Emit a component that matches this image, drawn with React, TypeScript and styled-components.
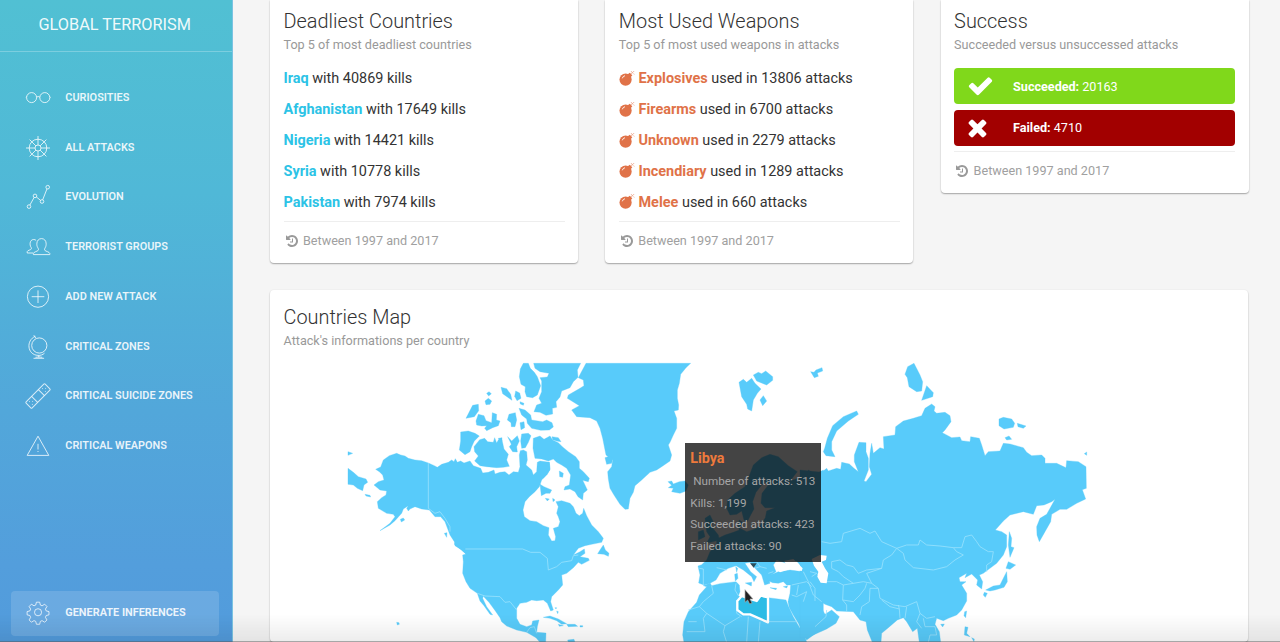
import React from "react";
import styled, { createGlobalStyle } from "styled-components";

const GlobalStyle = createGlobalStyle`
  * { box-sizing: border-box; }
  html, body { margin: 0; height: 100%; overflow: hidden; }
  body { font-family: Roboto, "Liberation Sans", sans-serif; background: #f5f5f5; color: #333; }
`;

const Page = styled.div`
  display: flex;
  width: 1280px;
  height: 642px;
  overflow: hidden;
  position: relative;
`;

const Sidebar = styled.aside`
  flex: 0 0 233px;
  height: 642px;
  display: flex;
  flex-direction: column;
  background: linear-gradient(to bottom, #51c0d3 0%, #50b8d7 30%, #52a7da 64%, #539edc 88%, #529bdc 100%);
  border-right: 1px solid #7ac3e2;
  color: #fff;
`;

const Brand = styled.div`
  height: 52px;
  padding: 15px 0 0 38.5px;
  border-bottom: 1px solid rgba(255, 255, 255, 0.25);
  font-size: 16.3px;
  line-height: 20px;
  white-space: nowrap;
  color: rgba(255, 255, 255, 0.93);
`;

const Nav = styled.nav`
  flex: 1;
  display: flex;
  flex-direction: column;
  padding: 23.45px 13px 6.1px 11px;
`;

const NavItem = styled.a<{ $active?: boolean }>`
  display: flex;
  align-items: center;
  flex: 0 0 45px;
  margin-bottom: ${(p) => (p.$active ? 0 : "4.75px")};
  margin-top: ${(p) => (p.$active ? "auto" : 0)};
  padding-left: 13px;
  gap: 13.3px;
  border-radius: 4px;
  background: ${(p) => (p.$active ? "rgba(255,255,255,0.14)" : "transparent")};
  font-size: 10.9px;
  font-weight: ${(p) => (p.$active ? 700 : 600)};
  line-height: 20px;
  white-space: nowrap;
  color: rgba(255, 255, 255, 0.88);
  svg { flex: none; }
`;

const Main = styled.main`
  flex: 1;
  display: flex;
  flex-direction: column;
  gap: 27px;
  padding: 0 0 0 37px;
`;

const CardRow = styled.div`
  display: flex;
  align-items: flex-start;
  gap: 27.3px;
  height: 263px;
`;

const Card = styled.section<{ $wide?: boolean; $top?: number }>`
  flex: none;
  width: ${(p) => (p.$wide ? "978px" : "308px")};
  padding: ${(p) => p.$top ?? 9}px 13.5px 0;
  background: #fff;
  border-radius: ${(p) => (p.$wide ? "4px" : "0 0 4px 4px")};
  box-shadow: 0 1px 1.5px rgba(0, 0, 0, 0.32), 0 0 0 1px rgba(60, 60, 60, 0.015);
`;

const Title = styled.h4`
  margin: 0;
  font-size: 19.9px;
  font-weight: 300;
  line-height: 25px;
  color: #333;
`;

const Subtitle = styled.p`
  margin: 2px 0 0;
  font-size: 12.63px;
  line-height: 17px;
  color: #999;
`;

const List = styled.div`
  padding-top: 10.6px;
`;

const Entry = styled.div`
  display: flex;
  align-items: center;
  height: 30.8px;
  font-size: 14.45px;
  white-space: pre;
`;

const Name = styled.b<{ $color: string }>`
  color: ${(p) => p.$color};
  font-weight: 700;
`;

const Footer = styled.div<{ $gap: number }>`
  display: flex;
  align-items: center;
  gap: 5.5px;
  margin-top: ${(p) => p.$gap}px;
  height: 42px;
  padding: 0 0 4px 2px;
  border-top: 1px solid #eee;
  font-size: 12.63px;
  color: #a0a0a0;
`;

const Alert = styled.div<{ $color: string }>`
  display: flex;
  align-items: center;
  height: 36px;
  margin-bottom: 5.6px;
  padding-left: 13px;
  border-radius: 4px;
  background: ${(p) => p.$color};
  color: #fff;
  font-size: 12.6px;
  white-space: pre;
`;

const AlertIcon = styled.span`
  display: flex;
  width: 46px;
`;

const Alerts = styled.div`
  padding-top: 15px;
`;

const MapFrame = styled.div`
  position: relative;
  width: 950px;
  height: 287px;
  margin-top: 6px;
`;

const Tooltip = styled.div`
  position: absolute;
  left: 401.5px;
  top: 87.5px;
  width: 136px;
  height: 119.5px;
  padding: 5.5px 5px 5px 5.3px;
  background: rgba(6, 6, 6, 0.75);
  color: #a6a6a6;
  font-size: 11.7px;
  line-height: 21.7px;
  white-space: pre;
`;

const TooltipName = styled.div`
  margin-bottom: 1.3px;
  font-size: 14.3px;
  font-weight: 700;
  color: #ee7a3c;
`;

const BottomShade = styled.div`
  position: absolute;
  left: 0;
  right: 0;
  bottom: 0;
  height: 28px;
  pointer-events: none;
  background: linear-gradient(to bottom, rgba(0, 0, 0, 0), rgba(0, 0, 0, 0.07));
  border-bottom: 1px solid rgba(80, 80, 80, 0.5);
`;

const icons: Record<string, React.ReactNode> = {
  glasses: (
    <>
      <circle cx="7.6" cy="13.6" r="5" /><circle cx="20.8" cy="13.6" r="5" />
      <path d="M12.6 13.2q1.6-1.5 3.2 0M2.6 12.8l-.8.6M25.8 12.8l.8.6" />
    </>
  ),
  wheel: (
    <>
      <circle cx="14" cy="14" r="8.8" /><circle cx="14" cy="14" r="3" />
      <path d="M14 2v9M14 17v9M2 14h9M17 14h9M5.6 5.6l6.3 6.3M16.1 16.1l6.3 6.3M22.4 5.6l-6.3 6.3M11.9 16.1l-6.3 6.3" />
    </>
  ),
  graph: (
    <>
      <circle cx="5" cy="23.6" r="1.8" /><circle cx="11" cy="12.9" r="1.8" />
      <circle cx="18" cy="18.5" r="1.8" /><circle cx="23.7" cy="4.2" r="1.8" />
      <path d="M5.9 22l4.2-7.5M12.4 14l4.2 3.4M18.7 16.8l4.3-11" />
    </>
  ),
  users: (
    <>
      <path d="M14.2 17.3c.7-1-.1-2-.6-3-.5-.8-.9-2.2-.7-4.2.2-2.3 1.7-4.5 4.6-4.5s4.4 2.2 4.6 4.5c.2 2-.2 3.4-.7 4.2-.5 1-1.2 2-.6 3 .9 1.1 4.7 1.6 5 3.1v1.200H9.400v-1.200c.3-1.500 3.900-2 4.800-3.100z" />
      <path d="M9.200 20H3.200v-1.400c.4-1.400 3.300-1.500 4-2.500.6-1-.2-1.800-.6-2.600-.5-1-.6-2-.5-3.300.2-2 1.400-3.700 3.600-3.700 1 0 1.800.3 2.400.9" />
    </>
  ),
  plus: (
    <>
      <circle cx="14" cy="13.700" r="10.600" /><path d="M14 7.400v12.600M7.700 13.700h12.600" />
    </>
  ),
  globe: (
    <>
      <circle cx="15.300" cy="12.500" r="7.600" />
      <path d="M11.300 3.300C1.900 7.200 3 21.800 14 22.400c2.700.1 4.600-.5 6.500-2.200M9.800 2.200l2.100 3M14.800 22.500v2M9.500 25.300h10.600M11.500 24.300q3.500-.7 6.800 0" />
    </>
  ),
  bandage: (
    <g transform="rotate(-45 14 14)">
      <rect x="0.500" y="9.700" width="27" height="8.600" rx="1" />
      <path d="M9.200 9.700v8.600M18.800 9.700v8.600" />
      <path d="M3.600 12h.8M3.600 16h.8M6 14h.8M22 12h.8M22 16h.8M24.400 14h.8" />
    </g>
  ),
  warning: (
    <>
      <path d="M14 4.200L24.800 23.400H3.200z" /><path d="M14 11.800v5.700M14 19v1" />
    </>
  ),
  gear: (
    <g transform="translate(.6 .3) scale(.96)">
      <circle cx="14" cy="13.500" r="3.700" />
      <path d="M12.300 3h3.400l.7 3 1.800.8 2.700-1.700 2.400 2.400-1.600 2.700.8 1.900 2.900.7v3.400l-2.900.7-.8 1.900 1.600 2.700-2.400 2.400-2.700-1.700-1.800.8-.7 3h-3.400l-.7-3-1.800-.8-2.700 1.700L4.700 21.500l1.600-2.700-.8-1.900-2.900-.7v-3.400l2.900-.7.8-1.900L4.700 7.500l2.400-2.400 2.700 1.700 1.800-.8z" strokeLinejoin="round" />
    </g>
  ),
};

const NavIcon = ({ name }: { name: string }) => (
  <svg width="28" height="28" viewBox="0 0 28 28" fill="none" stroke="rgba(255,255,255,.78)" strokeWidth="1">
    {icons[name]}
  </svg>
);

const HistoryIcon = () => (
  <svg width="12" height="12" viewBox="128 128 1536 1536" fill="#999">
    <path d="M1664 896q0 156-61 298t-164 245-245 164-298 61q-172 0-327-72.500t-264-204.500q-7-10-6.500-22.500t8.500-20.500l137-138q10-9 25-9 16 2 23 12 73 95 179 147t225 52q104 0 198.500-40.500t163.500-109.500 109.500-163.500 40.500-198.500-40.500-198.500-109.500-163.500-163.500-109.500-198.500-40.500q-98 0-188 35.500t-160 101.500l137 138q31 30 14 69-17 40-59 40h-448q-26 0-45-19t-19-45v-448q0-42 40-59 39-17 69 14l130 129q107-101 244.500-156.500t284.500-55.500q156 0 298 61t245 164 164 245 61 298zm-640-288v448q0 14-9 23t-23 9h-320q-14 0-23-9t-9-23v-64q0-14 9-23t23-9h224v-352q0-14 9-23t23-9h64q14 0 23 9t9 23z" />
  </svg>
);

const BombIcon = () => (
  <svg width="19.7" height="16" viewBox="0 0 19.7 16">
    <circle cx="6.600" cy="8.600" r="6.100" fill="#e07248" />
    <path d="M8.500 3.600l2.200-1.900 2.600 2.600-2 2.400z" fill="#e07248" />
    <path d="M3.300 7.300q.6-2.200 2.700-2.600" fill="none" stroke="#fff" strokeWidth=".9" />
    <path d="M11.700 3q1.100-1.900 2.400-1.300M12.200.3l.8.800M14.700 2.600l.5.800M14.500.8l.5-.8" fill="none" stroke="#e58d6b" strokeWidth=".8" />
  </svg>
);

const CheckIcon = () => (
  <svg width="27" height="27" viewBox="0 50 1792 1792" fill="#fff">
    <path d="M1671 566q0 40-28 68l-724 724-136 136q-28 28-68 28t-68-28l-136-136-362-362q-28-28-28-68t28-68l136-136q28-28 68-28t68 28l294 295 656-657q28-28 68-28t68 28l136 136q28 28 28 68z" />
  </svg>
);

const TimesIcon = () => (
  <svg width="27" height="27" viewBox="200 0 1792 1792" fill="#fff">
    <path d="M1490 1322q0 40-28 68l-136 136q-28 28-68 28t-68-28l-294-294-294 294q-28 28-68 28t-68-28l-136-136q-28-28-28-68t28-68l294-294-294-294q-28-28-28-68t28-68l136-136q28-28 68-28t68 28l294 294 294-294q28-28 68-28t68 28l136 136q28 28 28 68t-28 68l-294 294 294 294q28 28 28 68z" />
  </svg>
);

const americas = [
  "M107 343L122 336 130 315 148 302 170 295 182 300 195 303 205 310 225 315 245 317 265 324 283 332 292 337 305 328 325 322 335 315 342 320 346 311 352 322 362 318 372 324 390 318 400 332 422 340 428 354 445 352 462 345 465 357 480 352 495 350 507 360 520 350 535 352 540 335 538 300 541 287 550 285 560 290 562 315 558 330 575 345 580 360 590 350 592 322 600 318 628 322 630 345 620 358 605 375 598 395 585 410 568 425 555 440 549 465 553 485 570 497 590 500 610 512 627 518 625 540 635 558 645 557 647 545 640 520 655 515 660 500 655 485 650 475 655 455 648 440 665 437 690 445 700 455 708 475 718 482 728 475 731 460 740 482 755 510 775 530 790 550 785 562 755 568 735 572 715 580 700 600 720 590 733 582 735 595 720 605 745 610 748 616 725 628 715 622 700 638 680 655 665 660 668 690 655 705 635 725 632 740 640 765 632 768 622 745 610 735 590 737 575 735 560 742 540 745 530 760 530 790 540 808 560 815 575 810 578 798 597 795 592 815 590 832 618 834 617 862 600 862 588 848 560 832 530 825 500 813 485 800 480 788 464 765 447 742 430 724 428 730 440 755 458 780 450 778 432 752 420 738 412 715 390 700 378 680 368 655 370 620 368 600 378 597 365 585 345 572 343 560 330 540 315 500 302 485 285 485 268 465 245 462 225 455 210 462 205 468 200 460 205 452 190 462 185 475 165 497 150 510 120 527 150 505 165 485 160 478 140 475 115 460 112 440 125 428 138 420 140 408 120 405 102 390 115 380 132 375 128 360 118 350Z",
  "M24 340L40 352 55 365 78 372 83 382 72 390 68 407 52 400 40 390 24 388Z", "M24 290L38 295 24 301Z",
  "M75 418L90 421 92 426 78 423Z", "M181 493L190 489 194 495 184 501Z", "M313 535L321 533 320 547Z",
  "M342 566L360 572 376 584 378 597 362 583Z",
  "M550 25L565 25 571 40 583 52 592 65 602 92 592 120 578 128 560 125 555 110 556 95 543 88 538 65 541 42Z",
  "M581 25L722 25 712 45 714 67 700 80 690 98 665 108 660 126 648 140 650 157 637 160 638 177 618 181 600 172 582 170 590 150 605 145 597 130 605 110 605 78 600 68 622 66 627 55 600 50 585 40Z",
  "M483 97L500 101 512 118 516 136 502 126 488 116Z", "M527 108L539 114 543 130 531 137 524 124Z",
  "M540 140L552 145 550 151 541 147Z", "M440 115L447 110 454 116 446 123Z", "M435 138L445 130 455 138 450 148 438 149Z",
  "M398 151L415 148 416 167 403 185 378 190Z",
  "M410 210L408 198 415 178 432 182 438 197 455 203 457 173 470 178 469 195 480 198 475 212 458 218 440 227 434 220 440 212 425 213Z",
  "M502 195L507 178 526 173 530 195 525 215 514 215 513 203Z", "M540 203L552 200 554 218 543 224Z",
  "M537 160L555 165 572 180 575 195 608 200 620 195 636 203 640 216 628 225 602 226 575 220 562 205 560 192 545 180Z",
  "M362 231L385 228 405 235 418 243 403 258 395 275 390 290 375 299 358 285 362 258Z",
  "M419 254L434 250 443 260 460 262 464 248 470 264 475 255 486 255 492 282 505 298 500 315 508 334 490 337 470 338 440 335 420 332 404 318 415 303 404 290 402 275Z",
  "M475 250L486 248 486 258 478 260Z",
  "M503 245L515 258 532 242 538 258 530 275 532 291 518 290 508 275 514 268Z",
  "M545 237L565 235 573 242 565 262 556 278 545 280 542 258Z",
  "M580 250L600 243 612 253 630 243 638 255 655 263 667 275 685 290 707 305 718 320 718 340 730 350 748 370 745 380 728 376 735 390 742 405 730 415 728 435 714 425 705 410 690 402 672 405 675 395 688 390 692 360 680 340 665 330 650 322 640 312 625 318 605 312 585 310 579 280Z",
  "M636 245L655 248 663 260 650 258 638 254Z", "M658 348L670 355 668 367 659 365Z",
  "M600 322L628 322 630 342 622 358 610 370 602 366Z", "M600 388L612 395 635 405 630 415 618 415 604 422Z",
  "M616 430L628 432 622 438Z", "M638 430L645 435 639 440Z",
  "M780 585L790 570 796 585 807 595 805 604 792 598 773 596Z",
  "M610 787L630 783 655 792 680 806 665 808 650 797 630 790Z", "M680 808L705 808 713 814 685 815Z", "M655 808L670 812 658 814Z", "M720 812L728 812 728 816 720 816Z",
  "M170 802L177 803 178 808 172 810Z", "M645 758L650 758 648 762Z", "M650 768L655 770 653 776Z", "M683 855L702 853 705 862 685 862Z",
];

const atlantic = [
  "M78 25L392 25 378 38 362 58 358 85 352 105 352 130 356 150 355 165 342 168 350 190 350 220 340 240 330 262 325 270 335 300 330 318 305 335 290 345 270 352 245 375 225 392 220 412 210 430 205 462 195 463 180 448 162 420 150 400 145 372 143 350 155 335 158 315 150 310 138 300 135 285 128 250 120 220 110 198 90 188 50 185 35 165 58 152 22 130 25 120 60 100 72 92 70 75 55 68Z",
  "M135 308L150 303 158 310 155 325 140 328Z",
  "M324 380L335 378 340 387 358 380 375 378 385 390 378 408 360 415 335 410 340 400 325 398 335 391Z",
  "M537 82L550 73 560 82 575 70 585 85 603 102 592 115 580 135 575 168 563 162 560 148 545 125Z",
  "M580 60L595 52 605 56 617 48 638 65 638 76 620 90 590 78Z", "M600 135L610 122 620 138 608 152Z",
  "M752 50L762 52 768 45 786 38 788 48 772 54 775 64 763 68Z",
  "M790 345L765 358 745 345 742 358 752 375 745 382 725 366 690 378 712 350 685 332 655 305 630 298 605 308 580 330 568 362 555 395 525 415 503 435 500 460 510 480 530 478 545 468 552 495 562 500 572 480 582 462 578 440 588 412 605 390 615 382 625 390 606 415 603 445 615 458 645 458 620 468 616 488 600 512 585 522 560 530 540 520 548 502 538 495 534 512 538 525 520 532 495 540 470 552 470 568 450 590 440 615 425 629 414 633 420 660 416 684 432 690 450 685 468 675 480 655 505 640 528 632 550 645 575 665 582 680 590 665 572 650 555 625 570 622 585 640 605 660 614 690 630 685 625 665 648 650 640 630 650 615 680 625 710 618 730 642 740 652 790 660Z",
  "M435 490L450 480 460 500 455 515 475 540 478 555 440 565 450 545 440 530Z", "M415 530L430 525 435 545 415 555Z",
  "M620 664L638 657 655 650 690 645 730 650 770 665 790 670 790 770 780 760 765 740 790 780 790 818 740 855 730 838 715 805 700 780 688 758 684 740 690 715 692 690 680 690 670 680 655 685 638 683 622 676Z",
  "M440 695L455 692 480 686 528 680 538 690 540 710 535 722 545 728 565 730 590 738 600 725 625 728 655 732 678 735 686 755 700 785 720 820 736 848 740 862 372 862 368 840 372 800 385 770 410 742 418 720Z",
  "M524 658L532 655 534 670 526 678Z", "M527 635L533 640 530 652Z", "M556 684L575 682 574 693Z", "M630 698L650 700 648 704Z", "M670 695L683 692 680 699Z",
  "M430 692L450 684 455 692 445 697Z",
];

const asia = [
  "M-30 345L35 352 50 340 55 348 80 340 92 343 95 322 118 327 132 340 145 350 133 320 133 300 147 262 168 263 168 290 175 310 175 345 162 378 168 380 185 358 178 335 180 295 185 265 190 295 210 278 222 282 220 245 255 240 257 215 280 198 310 190 335 182 345 160 365 147 375 155 372 168 380 175 405 172 420 182 423 200 405 225 397 233 425 248 450 246 455 257 480 260 482 245 508 250 515 270 525 302 535 290 570 288 580 265 600 267 640 278 650 292 665 302 695 300 705 310 705 325 740 325 768 338 770 317 805 320 828 335 829 400 817 404 827 432 800 445 770 463 750 463 725 478 722 500 705 530 688 560 681 540 680 515 690 490 710 478 735 433 725 440 702 450 680 452 670 478 640 470 600 480 580 498 556 525 575 530 590 540 590 575 580 600 560 625 540 640 520 655 508 660 518 680 515 702 500 690 503 675 485 657 465 668 470 655 447 668 450 680 468 680 455 690 470 715 470 738 455 765 440 780 415 790 400 797 380 790 375 808 388 830 392 862 328 862 322 820 308 830 290 800 280 788 262 795 235 818 215 835 213 862 187 862 172 825 168 800 150 795 130 770 80 768 65 755 45 748 25 735 18 738 35 760 45 778 65 765 88 785 78 805 50 822 10 840 -15 850 -30 850Z",
  "M44 280L52 250 68 212 100 185 140 168 145 178 115 198 80 228 65 260 65 285 75 305 48 302 40 290Z",
  "M285 58L293 35 312 25 330 60 338 80 335 108 320 110 297 95 292 68Z", "M350 92L370 113 368 125 335 136Z",
  "M567 192L580 187 605 192 614 205 610 217 582 222 567 212Z", "M622 205L648 213 640 220 624 215Z", "M585 248L597 243 605 253 590 255Z",
  "M823 296L830 291 830 301Z", "M598 530L605 550 603 575 612 578 600 607 595 570Z",
  "M595 620L617 630 600 643 588 640Z", "M590 650L592 680 582 697 555 705 540 708 527 705 550 693 570 690 580 670Z", "M523 712L532 715 526 727 520 720Z",
  "M392 808L403 807 398 816Z", "M464 770L470 768 467 788 462 782Z", "M465 815L474 817 470 835 480 845 463 840Z", "M485 848L493 852 492 860Z",
];

const americasBorders =
  "M265 324V460L285 475 300 470 315 490 330 515 330 530M376 582H548M548 582L572 592 600 592 622 610 625 645 650 635 665 622 695 617 700 602 715 600M412 715L435 723 480 725 495 742 510 740 530 765M560 832L570 818 583 815 590 835";
const africaBorders =
  "M455 692L460 715 430 740 418 755 385 765M528 685L525 705 535 722M530 735L530 775 545 785M418 755L440 775 495 812 540 785M440 775L430 790 435 830 380 830M495 812L490 830 500 862M625 728L625 790M625 800H710M565 785L560 862M385 800H410M600 800L595 862M418 640L430 642 430 690M470 638L500 645M585 640L600 635 620 640M600 635L590 620M625 655L640 650M695 690L740 680 755 695M695 720L710 725 740 710 730 740M715 690L710 720M730 650L745 680 760 720 785 740M755 665L770 655 790 675";
const asiaBorders =
  "M35 560L60 565 95 560 100 535 150 520 180 535 195 528 215 560 260 580 290 570 325 570 330 555 350 570 390 573 430 578 440 590 460 600 435 615 410 635 370 645 310 638 285 615 280 595 260 580M430 578L455 578 465 545 485 540 500 560 510 575 535 590 550 590 545 620 530 630 530 650M260 580L245 600 220 615 215 640 170 655 185 685 205 700 210 730 250 750 285 755 320 740 330 775 350 790 375 785M65 640V620L90 615 110 630 130 635 145 655 170 645 215 640M65 640L85 650 100 665 130 685 160 680 185 685M45 680H80L100 690 98 735 110 750 110 770M100 690L130 685M98 735L130 740 150 720 165 700 170 685M205 700L180 700 178 740 155 755 150 780M215 735L240 755 268 762 265 750M268 762L270 790M290 755L285 790M330 775L320 800 335 820M340 790L345 815 375 815 380 840 360 840 355 862M0 680L15 700 15 738M0 650L20 655M50 765L48 785 15 815";

const WorldMap = () => (
  <svg width="950" height="287" viewBox="284 355 950 287" fill="#58cbfa">
    <g stroke="#58cbfa" strokeWidth="1" strokeLinejoin="round">
      <g transform="translate(340 355) scale(.33333)">{americas.map((d) => <path key={d} d={d} />)}</g>
      <g transform="translate(560 355) scale(.33333)">{atlantic.map((d) => <path key={d} d={d} />)}</g>
      <g transform="translate(810 355) scale(.33333)">{asia.map((d) => <path key={d} d={d} />)}</g>
    </g>
    <g fill="none" stroke="#9be2fc" strokeWidth="2.4">
      <path transform="translate(340 355) scale(.33333)" d={americasBorders} />
      <path transform="translate(560 355) scale(.33333)" d={africaBorders} />
      <path transform="translate(810 355) scale(.33333)" d={asiaBorders} />
    </g>
    <g transform="translate(810 355) scale(.33333)" fill="#fff">
      <path d="M5 612L30 600 50 602 48 615 35 620 45 640 55 655 50 685 32 683 22 665 25 650 12 632Z" />
    </g>
    <g transform="translate(560 355) scale(.33333)">
      <path fill="#fff" d="M645 640L655 620 680 630 672 618 700 612 728 640 725 648 690 643 660 652Z" />
      <path d="M545 723L565 730 590 738 602 722 624 727V802L570 778 550 778 532 765 532 738Z" fill="#2cbce6" stroke="#fff" strokeWidth="7" strokeLinejoin="round" />
      <path d="M570 625h20l-9 13z" fill="#2a4c59" />
      <path d="M555 704v38l8-7 6 12 7-3-6-12h9z" fill="#222" stroke="#aaa" strokeWidth="2" />
    </g>
  </svg>
);

const navItems: [string, string][] = [
  ["glasses", "CURIOSITIES"],
  ["wheel", "ALL ATTACKS"],
  ["graph", "EVOLUTION"],
  ["users", "TERRORIST GROUPS"],
  ["plus", "ADD NEW ATTACK"],
  ["globe", "CRITICAL ZONES"],
  ["bandage", "CRITICAL SUICIDE ZONES"],
  ["warning", "CRITICAL WEAPONS"],
];

const countries: [string, number][] = [
  ["Iraq", 40869], ["Afghanistan", 17649], ["Nigeria", 14421], ["Syria", 10778], ["Pakistan", 7974],
];

const weapons: [string, number][] = [
  ["Explosives", 13806], ["Firearms", 6700], ["Unknown", 2279], ["Incendiary", 1289], ["Melee", 660],
];

const Period = ({ gap }: { gap: number }) => (
  <Footer $gap={gap}><HistoryIcon />Between 1997 and 2017</Footer>
);

export default function App() {
  return (
    <Page>
      <GlobalStyle />
      <Sidebar>
        <Brand>GLOBAL TERRORISM</Brand>
        <Nav>
          {navItems.map(([icon, label]) => (
            <NavItem key={label}><NavIcon name={icon} />{label}</NavItem>
          ))}
          <NavItem $active><NavIcon name="gear" />GENERATE INFERENCES</NavItem>
        </Nav>
      </Sidebar>
      <Main>
        <CardRow>
          <Card>
            <Title>Deadliest Countries</Title>
            <Subtitle>Top 5 of most deadliest countries</Subtitle>
            <List>
              {countries.map(([name, kills]) => (
                <Entry key={name}><Name $color="#2cc3e6">{name}</Name> with {kills} kills</Entry>
              ))}
            </List>
            <Period gap={3.6} />
          </Card>
          <Card>
            <Title>Most Used Weapons</Title>
            <Subtitle>Top 5 of most used weapons in attacks</Subtitle>
            <List>
              {weapons.map(([name, attacks]) => (
                <Entry key={name}><BombIcon /><Name $color="#e07248">{name}</Name> used in {attacks} attacks</Entry>
              ))}
            </List>
            <Period gap={3.6} />
          </Card>
          <Card>
            <Title>Success</Title>
            <Subtitle>Succeeded versus unsuccessed attacks</Subtitle>
            <Alerts>
              <Alert $color="#80d81b"><AlertIcon><CheckIcon /></AlertIcon><b>Succeeded:</b> 20163</Alert>
              <Alert $color="#a20000"><AlertIcon><TimesIcon /></AlertIcon><b>Failed:</b> 4710</Alert>
            </Alerts>
            <Period gap={0} />
          </Card>
        </CardRow>
        <Card $wide $top={15}>
          <Title>Countries Map</Title>
          <Subtitle>Attack's informations per country</Subtitle>
          <MapFrame>
            <WorldMap />
            <Tooltip>
              <TooltipName>Libya</TooltipName>
              <div> Number of attacks: 513</div>
              <div>Kills: 1,199</div>
              <div>Succeeded attacks: 423</div>
              <div>Failed attacks: 90</div>
            </Tooltip>
          </MapFrame>
        </Card>
      </Main>
      <BottomShade />
    </Page>
  );
}
